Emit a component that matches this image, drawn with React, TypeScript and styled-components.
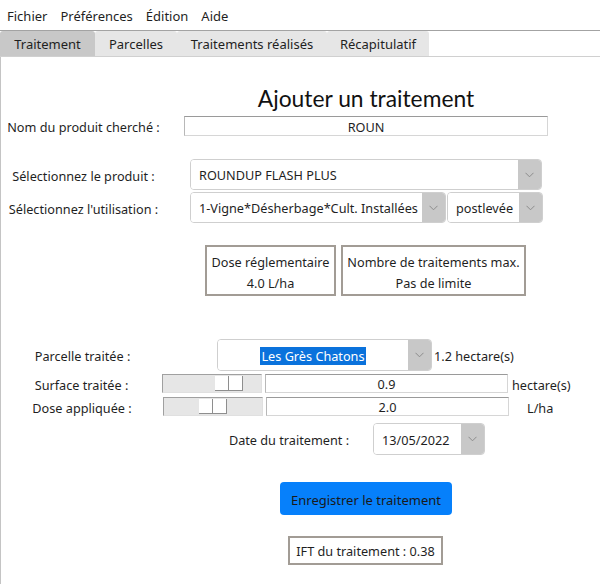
import styled, { createGlobalStyle } from 'styled-components';

const Global = createGlobalStyle`
  html, body {
    margin: 0;
    padding: 0;
    background: #ffffff;
  }
  body {
    font-family: "Noto Sans", "Open Sans", sans-serif;
    font-size: 12.7px;
    color: #1f1f1f;
  }
`;

const Window = styled.div`
  width: 600px;
  height: 584px;
  display: flex;
  flex-direction: column;
  overflow: hidden;
`;

const MenuBar = styled.div`
  height: 31px;
  display: flex;
  align-items: center;
  gap: 13px;
  padding-left: 7px;
  padding-top: 3px;
  box-sizing: border-box;
  border-bottom: 1px solid #a3a3a3;
`;

const MenuItem = styled.span`
  line-height: 1;
  font-size: 13px;
`;

const TabBar = styled.div`
  height: 25px;
  display: flex;
  border-bottom: 1px solid #d0d0d0;
`;

const Tab = styled.div<{ $active?: boolean; $w: number }>`
  width: ${p => p.$w}px;
  display: flex;
  align-items: center;
  justify-content: center;
  padding-top: 1px;
  font-size: 13px;
  background: ${p => (p.$active ? '#c8c8c8' : '#e6e6e6')};
  border-top-right-radius: 3px;
  border-top-left-radius: 3px;
`;

const Panel = styled.div`
  flex: 1;
  border-left: 1px solid #c4c4c4;
  display: flex;
  flex-direction: column;
`;

const Row = styled.div<{ $top: number; $h: number }>`
  margin-top: ${p => p.$top}px;
  height: ${p => p.$h}px;
  display: flex;
  align-items: center;
`;

const Title = styled.h1`
  margin: 0 0 0 183px;
  width: 364px;
  text-align: center;
  font-family: Lato, "Noto Sans", sans-serif;
  font-weight: 400;
  font-size: 22.8px;
  line-height: 26px;
  color: #111;
`;

const Label = styled.div<{ $w?: number; $left?: number }>`
  width: ${p => p.$w ?? 165}px;
  margin-left: ${p => p.$left ?? 0}px;
  padding-top: 2px;
  flex: none;
  text-align: center;
  white-space: nowrap;
`;

const TextField = styled.div<{ $w: number; $left?: number }>`
  width: ${p => p.$w}px;
  margin-left: ${p => p.$left ?? 0}px;
  height: 100%;
  box-sizing: border-box;
  padding-top: 1px;
  display: flex;
  align-items: center;
  justify-content: center;
  border: 1px solid #d6d6d6;
  border-top-color: #9a9a9a;
  border-left-color: #b8b8b8;
  background: #fff;
`;

const Combo = styled.div<{ $w: number; $left?: number }>`
  width: ${p => p.$w}px;
  margin-left: ${p => p.$left ?? 0}px;
  height: 100%;
  box-sizing: border-box;
  display: flex;
  border: 1px solid #cfcfcf;
  border-radius: 4px;
  overflow: hidden;
  flex: none;
`;

const ComboValue = styled.div<{ $center?: boolean }>`
  flex: 1;
  display: flex;
  align-items: center;
  justify-content: ${p => (p.$center ? 'center' : 'flex-start')};
  padding-left: ${p => (p.$center ? 0 : 8)}px;
  padding-top: 1px;
  background: #fff;
  white-space: nowrap;
  overflow: hidden;
`;

const Selected = styled.span`
  background: #0a72dc;
  color: #fff;
  padding: 0 1px;
`;

const ComboArrow = styled.div`
  width: 23px;
  flex: none;
  background: #c8c8c8;
  display: flex;
  align-items: center;
  justify-content: center;
`;

const Chevron = () => (
  <svg width="9" height="6" viewBox="0 0 9 6">
    <path d="M0.5 0.8 L4.5 4.8 L8.5 0.8" fill="none" stroke="#8c8c8c" strokeWidth="1" />
  </svg>
);

const InfoRow = styled(Row)`
  gap: 5px;
  padding-left: 204px;
`;

const InfoBox = styled.div<{ $w: number }>`
  width: ${p => p.$w}px;
  height: 100%;
  box-sizing: border-box;
  border: 2px solid #a29c95;
  padding-top: 4px;
  display: flex;
  flex-direction: column;
  align-items: center;
  justify-content: center;
  gap: 2px;
  line-height: 19px;
`;

const Unit = styled.div<{ $left?: number }>`
  margin-left: ${p => p.$left ?? 0}px;
  padding-top: 2px;
  white-space: nowrap;
`;

const Slider = styled.div<{ $w: number; $pos: number }>`
  width: ${p => p.$w}px;
  height: 19px;
  box-sizing: border-box;
  background: #e6e6e6;
  border: 1px solid #a0a0a0;
  border-right-color: #e0e0e0;
  border-bottom-color: #e0e0e0;
  display: flex;
  align-items: center;
  padding-left: ${p => p.$pos}px;
  flex: none;
`;

const HandleSeg = styled.div`
  width: 13px;
  height: 14px;
  background: #ffffff;
  border-right: 1px solid #8e8e8e;
  border-bottom: 1px solid #8e8e8e;
`;

const Button = styled.button<{ $left: number }>`
  margin-left: ${p => p.$left}px;
  width: 172px;
  height: 100%;
  border: none;
  border-radius: 4px;
  background: #0680fb;
  color: #1a1a1a;
  font-family: inherit;
  font-size: 13px;
  padding: 2px 0 0;
`;

const ResultBox = styled.div<{ $left: number }>`
  margin-left: ${p => p.$left}px;
  width: 155px;
  height: 100%;
  box-sizing: border-box;
  border: 2px solid #a29c95;
  padding-top: 1px;
  display: flex;
  align-items: center;
  justify-content: center;
`;

const App = () => {
  return (
    <Window>
      <Global />
      <MenuBar>
        <MenuItem>Fichier</MenuItem>
        <MenuItem>Préférences</MenuItem>
        <MenuItem>Édition</MenuItem>
        <MenuItem>Aide</MenuItem>
      </MenuBar>
      <TabBar>
        <Tab $active $w={95}>Traitement</Tab>
        <Tab $w={82}>Parcelles</Tab>
        <Tab $w={150}>Traitements réalisés</Tab>
        <Tab $w={102}>Récapitulatif</Tab>
      </TabBar>
      <Panel>
        <Row $top={28} $h={26}>
          <Title>Ajouter un traitement</Title>
        </Row>
        <Row $top={5} $h={20}>
          <Label>Nom du produit cherché :</Label>
          <TextField $w={364} $left={18}>ROUN</TextField>
        </Row>
        <Row $top={23} $h={31}>
          <Label>Sélectionnez le produit :</Label>
          <Combo $w={352} $left={24}>
            <ComboValue>ROUNDUP FLASH PLUS</ComboValue>
            <ComboArrow><Chevron /></ComboArrow>
          </Combo>
        </Row>
        <Row $top={2} $h={31}>
          <Label>Sélectionnez l'utilisation :</Label>
          <Combo $w={256} $left={24}>
            <ComboValue>1-Vigne*Désherbage*Cult. Installées</ComboValue>
            <ComboArrow><Chevron /></ComboArrow>
          </Combo>
          <Combo $w={96} $left={1}>
            <ComboValue>postlevée</ComboValue>
            <ComboArrow><Chevron /></ComboArrow>
          </Combo>
        </Row>
        <InfoRow $top={22} $h={51}>
          <InfoBox $w={131}>
            <span>Dose réglementaire</span>
            <span>4.0 L/ha</span>
          </InfoBox>
          <InfoBox $w={185}>
            <span>Nombre de traitements max.</span>
            <span>Pas de limite</span>
          </InfoBox>
        </InfoRow>
        <Row $top={43} $h={32}>
          <Label $w={163}>Parcelle traitée :</Label>
          <Combo $w={215} $left={53}>
            <ComboValue $center><Selected>Les Grès Chatons</Selected></ComboValue>
            <ComboArrow><Chevron /></ComboArrow>
          </Combo>
          <Unit $left={2}>1.2 hectare(s)</Unit>
        </Row>
        <Row $top={3} $h={19}>
          <Label $w={161}>Surface traitée :</Label>
          <Slider $w={100} $pos={52}>
            <HandleSeg />
            <HandleSeg />
          </Slider>
          <TextField $w={243} $left={3}>0.9</TextField>
          <Unit $left={4}>hectare(s)</Unit>
        </Row>
        <Row $top={4} $h={19}>
          <Label $w={162}>Dose appliquée :</Label>
          <Slider $w={100} $pos={35}>
            <HandleSeg />
            <HandleSeg />
          </Slider>
          <TextField $w={243} $left={3}>2.0</TextField>
          <Unit $left={18}>L/ha</Unit>
        </Row>
        <Row $top={7} $h={32}>
          <Label $w={122} $left={227}>Date du traitement :</Label>
          <Combo $w={112} $left={23}>
            <ComboValue>13/05/2022</ComboValue>
            <ComboArrow><Chevron /></ComboArrow>
          </Combo>
        </Row>
        <Row $top={27} $h={33}>
          <Button $left={279}>Enregistrer le traitement</Button>
        </Row>
        <Row $top={21} $h={29}>
          <ResultBox $left={287}>IFT du traitement : 0.38</ResultBox>
        </Row>
      </Panel>
    </Window>
  );
};

export default App;
